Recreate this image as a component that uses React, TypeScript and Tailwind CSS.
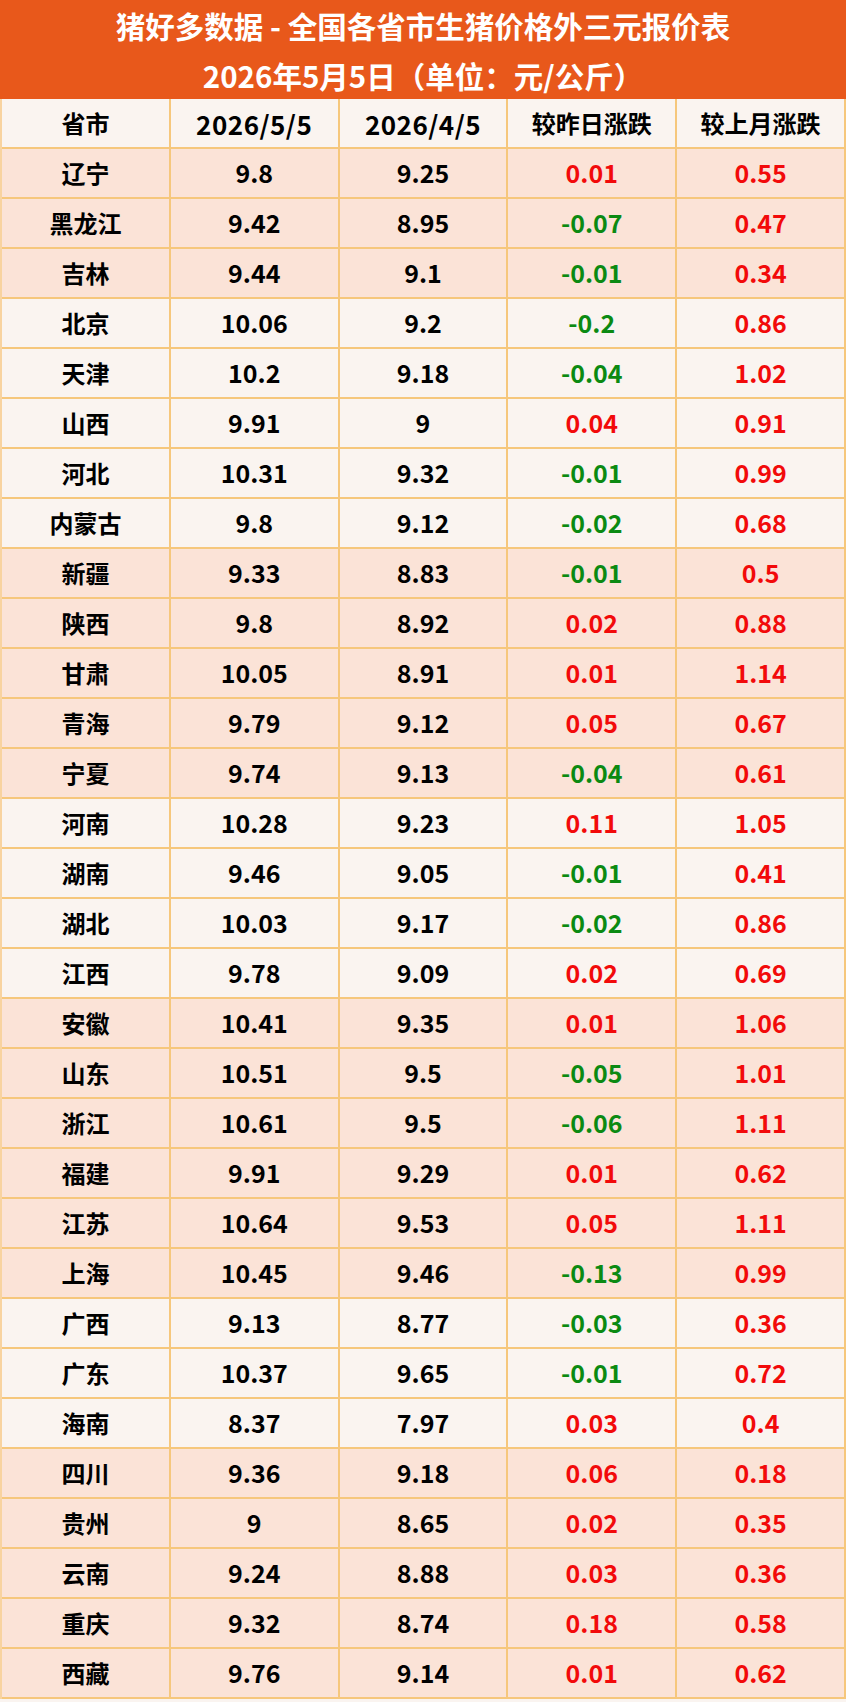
const rows: [string, string, string, string, string, boolean][] = [
  ['辽宁', '9.8', '9.25', '0.01', '0.55', true],
  ['黑龙江', '9.42', '8.95', '-0.07', '0.47', true],
  ['吉林', '9.44', '9.1', '-0.01', '0.34', true],
  ['北京', '10.06', '9.2', '-0.2', '0.86', false],
  ['天津', '10.2', '9.18', '-0.04', '1.02', false],
  ['山西', '9.91', '9', '0.04', '0.91', false],
  ['河北', '10.31', '9.32', '-0.01', '0.99', false],
  ['内蒙古', '9.8', '9.12', '-0.02', '0.68', false],
  ['新疆', '9.33', '8.83', '-0.01', '0.5', true],
  ['陕西', '9.8', '8.92', '0.02', '0.88', true],
  ['甘肃', '10.05', '8.91', '0.01', '1.14', true],
  ['青海', '9.79', '9.12', '0.05', '0.67', true],
  ['宁夏', '9.74', '9.13', '-0.04', '0.61', true],
  ['河南', '10.28', '9.23', '0.11', '1.05', false],
  ['湖南', '9.46', '9.05', '-0.01', '0.41', false],
  ['湖北', '10.03', '9.17', '-0.02', '0.86', false],
  ['江西', '9.78', '9.09', '0.02', '0.69', false],
  ['安徽', '10.41', '9.35', '0.01', '1.06', true],
  ['山东', '10.51', '9.5', '-0.05', '1.01', true],
  ['浙江', '10.61', '9.5', '-0.06', '1.11', true],
  ['福建', '9.91', '9.29', '0.01', '0.62', true],
  ['江苏', '10.64', '9.53', '0.05', '1.11', true],
  ['上海', '10.45', '9.46', '-0.13', '0.99', true],
  ['广西', '9.13', '8.77', '-0.03', '0.36', false],
  ['广东', '10.37', '9.65', '-0.01', '0.72', false],
  ['海南', '8.37', '7.97', '0.03', '0.4', false],
  ['四川', '9.36', '9.18', '0.06', '0.18', true],
  ['贵州', '9', '8.65', '0.02', '0.35', true],
  ['云南', '9.24', '8.88', '0.03', '0.36', true],
  ['重庆', '9.32', '8.74', '0.18', '0.58', true],
  ['西藏', '9.76', '9.14', '0.01', '0.62', true],
];

const font = { fontFamily: '"Noto Sans CJK SC", "Noto Sans", sans-serif' };

function changeColor(v: string) {
  return v.startsWith('-') ? 'text-[#0B8A12]' : 'text-[#F20A0A]';
}

export default function App() {
  return (
    <div className="w-[846px] h-[1702px] bg-[#FAF4F0]" style={font}>
      {/* Title band */}
      <div className="h-[99px] bg-[#E8581B] flex flex-col items-center justify-center text-white font-bold text-[29.5px] leading-[50px]">
        <div>猪好多数据 - 全国各省市生猪价格外三元报价表</div>
        <div>2026年5月5日（单位：元/公斤）</div>
      </div>

      {/* Table */}
      <div className="border-l-2 border-[#F8D3A0]">
        <div className="grid grid-cols-5 h-[50px] bg-[#FAF4F0] text-black font-bold text-[24px]">
          <div className="flex items-center justify-center border-r-2 border-b-2 border-[#F6C77C]">省市</div>
          <div className="flex items-center justify-center border-r-2 border-b-2 border-[#F6C77C] text-[26px] tracking-[0.5px]">2026/5/5</div>
          <div className="flex items-center justify-center border-r-2 border-b-2 border-[#F6C77C] text-[26px] tracking-[0.5px]">2026/4/5</div>
          <div className="flex items-center justify-center border-r-2 border-b-2 border-[#F6C77C]">较昨日涨跌</div>
          <div className="flex items-center justify-center border-r-2 border-b-2 border-[#F6C77C]">较上月涨跌</div>
        </div>
        {rows.map(([name, now, prev, day, month, peach]) => (
          <div
            key={name}
            className={`grid grid-cols-5 h-[50px] font-bold text-[25px] ${peach ? 'bg-[#FBE3D7]' : 'bg-[#FAF4F0]'}`}
          >
            <div className="flex items-center justify-center border-r-2 border-b-2 border-[#F6C77C] text-black text-[24px]">{name}</div>
            <div className="flex items-center justify-center border-r-2 border-b-2 border-[#F6C77C] text-black">{now}</div>
            <div className="flex items-center justify-center border-r-2 border-b-2 border-[#F6C77C] text-black">{prev}</div>
            <div className={`flex items-center justify-center border-r-2 border-b-2 border-[#F6C77C] ${changeColor(day)}`}>{day}</div>
            <div className={`flex items-center justify-center border-r-2 border-b-2 border-[#F6C77C] ${changeColor(month)}`}>{month}</div>
          </div>
        ))}
      </div>
    </div>
  );
}
